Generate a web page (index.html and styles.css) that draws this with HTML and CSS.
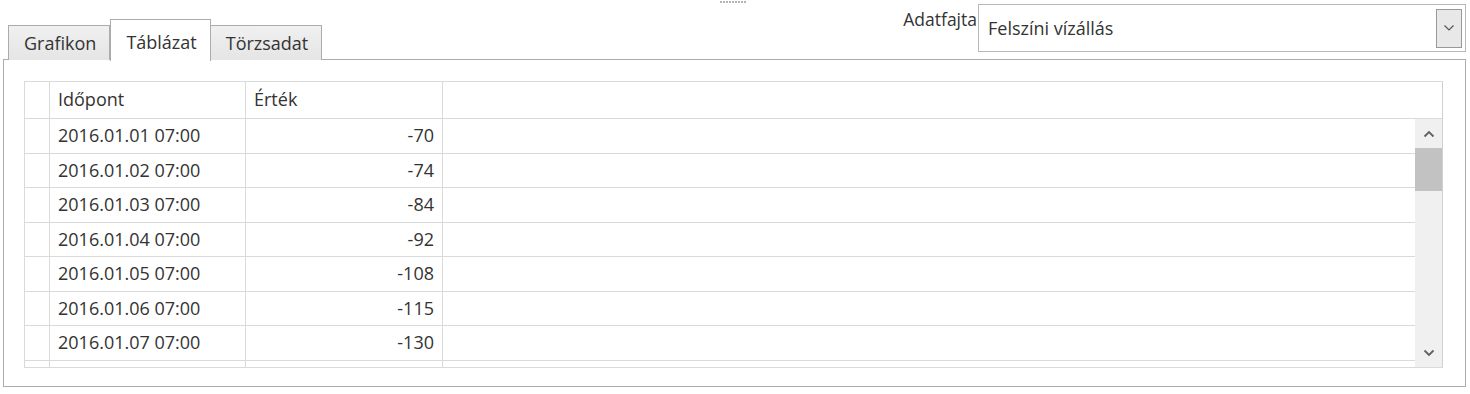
FILE: index.html
```html
<!DOCTYPE html>
<html lang="hu">
<head>
    <meta charset="UTF-8">
    <title>Adatok</title>
    <link rel="stylesheet" href="styles.css">
</head>
<body>
    <div class="grip"></div>
    <div class="top">
        <div class="tabs">
            <div class="tab">Grafikon</div>
            <div class="tab active">Táblázat</div>
            <div class="tab">Törzsadat</div>
        </div>
        <div class="picker">
            <span class="picker-label">Adatfajta</span>
            <div class="select">
                <span class="select-text">Felszíni vízállás</span>
                <span class="select-btn">
                    <svg width="12" height="8" viewBox="0 0 12 8"><path d="M1.5 1.5 L6 6 L10.5 1.5" fill="none" stroke="#555" stroke-width="1.2"/></svg>
                </span>
            </div>
        </div>
    </div>
    <div class="panel">
        <div class="grid">
            <div class="row head">
                <div class="cell rh"></div>
                <div class="cell time">Időpont</div>
                <div class="cell val left">Érték</div>
                <div class="cell fill"></div>
            </div>
            <div class="body">
                <div class="rows">
                    <div class="row"><div class="cell rh"></div><div class="cell time">2016.01.01 07:00</div><div class="cell val">-70</div><div class="cell fill"></div></div>
                    <div class="row"><div class="cell rh"></div><div class="cell time">2016.01.02 07:00</div><div class="cell val">-74</div><div class="cell fill"></div></div>
                    <div class="row"><div class="cell rh"></div><div class="cell time">2016.01.03 07:00</div><div class="cell val">-84</div><div class="cell fill"></div></div>
                    <div class="row"><div class="cell rh"></div><div class="cell time">2016.01.04 07:00</div><div class="cell val">-92</div><div class="cell fill"></div></div>
                    <div class="row"><div class="cell rh"></div><div class="cell time">2016.01.05 07:00</div><div class="cell val">-108</div><div class="cell fill"></div></div>
                    <div class="row"><div class="cell rh"></div><div class="cell time">2016.01.06 07:00</div><div class="cell val">-115</div><div class="cell fill"></div></div>
                    <div class="row"><div class="cell rh"></div><div class="cell time">2016.01.07 07:00</div><div class="cell val">-130</div><div class="cell fill"></div></div>
                    <div class="row"><div class="cell rh"></div><div class="cell time"></div><div class="cell val"></div><div class="cell fill"></div></div>
                </div>
                <div class="scrollbar">
                    <div class="arrow">
                        <svg width="12" height="8" viewBox="0 0 12 8"><path d="M1.5 6.5 L6 2 L10.5 6.5" fill="none" stroke="#606060" stroke-width="1.8"/></svg>
                    </div>
                    <div class="track">
                        <div class="thumb"></div>
                    </div>
                    <div class="arrow">
                        <svg width="12" height="8" viewBox="0 0 12 8"><path d="M1.5 1.5 L6 6 L10.5 1.5" fill="none" stroke="#606060" stroke-width="1.8"/></svg>
                    </div>
                </div>
            </div>
        </div>
    </div>
</body>
</html>
```
FILE: styles.css
```css
body {
    margin: 0;
    font-family: 'Open Sans', 'Noto Sans', sans-serif;
    color: #333;
    background: #fff;
    position: relative;
}
.grip {
    position: absolute;
    left: 720px;
    top: 1px;
    width: 27px;
    height: 2px;
    background: repeating-linear-gradient(90deg, #b5b5b5 0 2px, transparent 2px 3px);
}
.top {
    display: flex;
    justify-content: space-between;
    height: 60px;
    padding: 0 4px 0 8px;
}
.tabs {
    display: flex;
    align-items: flex-end;
    position: relative;
    z-index: 1;
}
.tab {
    height: 35px;
    box-sizing: border-box;
    padding: 5px 13px 0 15px;
    font-size: 18px;
    line-height: 24px;
    border: 1px solid #acacac;
    border-bottom: none;
    background: linear-gradient(#f0f0f0, #e5e5e5);
    color: #333;
}
.tab + .tab {
    border-left: none;
}
.tab.active {
    height: 42px;
    padding: 10px 13px 0 15px;
    background: #fff;
    border-left: 1px solid #acacac;
    margin-bottom: -1px;
}
.tab.active + .tab {
    border-left: none;
}
.picker {
    display: flex;
    align-items: flex-start;
    margin-top: 4px;
}
.picker-label {
    font-size: 17.5px;
    margin-top: 3px;
    margin-right: 1px;
}
.select {
    width: 488px;
    height: 48px;
    box-sizing: border-box;
    border: 1px solid #b8b8b8;
    display: flex;
    align-items: center;
    justify-content: space-between;
    padding: 0 3px 0 9px;
}
.select-text {
    font-size: 18px;
}
.select-btn {
    width: 26px;
    height: 39px;
    box-sizing: border-box;
    border: 1px solid #999;
    background: #e8e8e8;
    display: flex;
    align-items: center;
    justify-content: center;
}
.panel {
    margin: -1px 4px 0 3px;
    height: 328px;
    box-sizing: border-box;
    border: 1px solid #acacac;
    padding: 21px 22px 0 20px;
}
.grid {
    height: 287px;
    box-sizing: border-box;
    border: 1px solid #dadada;
    border-right: 1px solid #d0d0d0;
    display: flex;
    flex-direction: column;
    overflow: hidden;
}
.row {
    display: flex;
    height: 34.5px;
    flex-shrink: 0;
    border-bottom: 1px solid #dadada;
    box-sizing: border-box;
}
.row.head {
    height: 37px;
}
.cell {
    box-sizing: border-box;
    border-right: 1px solid #dadada;
    font-size: 18px;
    line-height: 33px;
    padding: 0 8px;
    white-space: nowrap;
}
.head .cell {
    line-height: 35px;
}
.rh {
    width: 25px;
}
.time {
    width: 196px;
}
.val {
    width: 197px;
    text-align: right;
}
.val.left {
    text-align: left;
}
.fill {
    flex: 1;
    border-right: none;
}
.body {
    flex: 1;
    display: flex;
    min-height: 0;
}
.rows {
    flex: 1;
    overflow: hidden;
}
.scrollbar {
    width: 27px;
    background: #f0f0f0;
    display: flex;
    flex-direction: column;
}
.arrow {
    height: 29px;
    display: flex;
    align-items: center;
    justify-content: center;
}
.track {
    flex: 1;
}
.thumb {
    height: 43px;
    background: #c2c2c2;
}
```
